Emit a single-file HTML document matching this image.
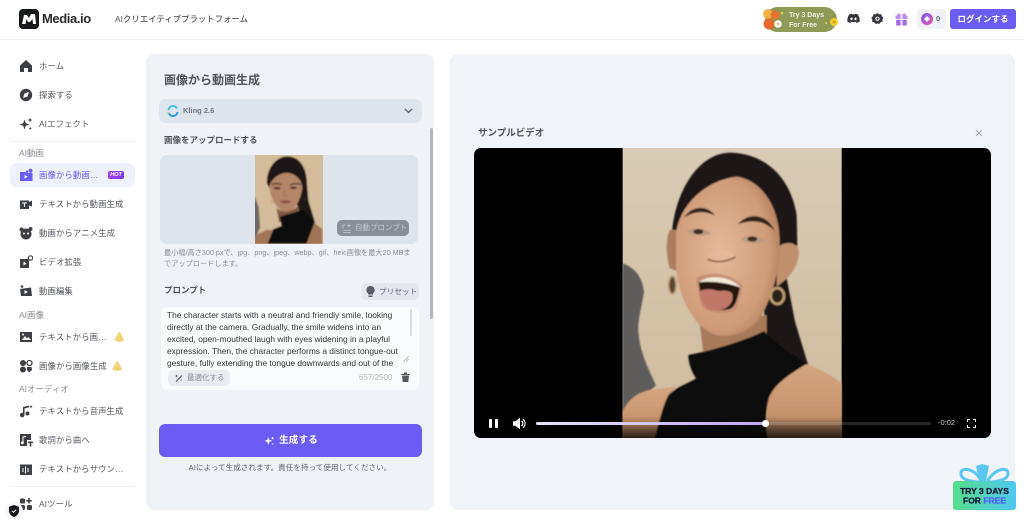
<!DOCTYPE html>
<html lang="ja"><head><meta charset="utf-8"><title>Media.io</title>
<style>
html,body{margin:0;padding:0;background:#fff;}
body{width:1024px;height:525px;overflow:hidden;position:relative;font-family:"Liberation Sans","Noto Sans CJK JP",sans-serif;color:#4a4d55;filter:blur(.3px);}
.a{position:absolute;white-space:nowrap;}
.n{position:absolute;left:39px;font-size:8.4px;line-height:12px;color:#55585f;white-space:nowrap;letter-spacing:.1px;}
.h{position:absolute;left:19px;font-size:8.5px;line-height:12px;color:#8b8e95;white-space:nowrap;}
svg.i{position:absolute;width:14px;height:14px;left:19px;fill:#3d3f45;}
</style></head><body>

<!-- header -->
<div class="a" style="left:0;top:39px;width:1024px;height:1px;background:#f1f2f4"></div>
<div class="a" style="left:19px;top:9px;width:20px;height:20px;border-radius:4px;background:#17181c"></div>
<svg class="a" style="left:21px;top:13px" width="16" height="12" viewBox="0 0 16 12"><path d="M1 11L3 2h3l2 3 2-4h4l1 10h-3l-.5-5L9 9H7L5.500 6 4.500 11z" fill="#fff"/></svg>
<div class="a" style="left:42px;top:9px;font-size:13px;line-height:20px;font-weight:700;color:#2a2b30;letter-spacing:-.4px">Media.io</div>
<div class="a" style="left:115px;top:12px;font-size:8.300px;line-height:14px;font-weight:500;color:#55575e;letter-spacing:.1px">AIクリエイティブプラットフォーム</div>

<div class="a" style="left:765px;top:7px;width:72px;height:25px;border-radius:13px;background:#8e9a55"></div>
<svg class="a" style="left:760px;top:5px" width="80" height="30" viewBox="0 0 80 30"><g><circle cx="8" cy="9" r="5" fill="#f2b347"/><circle cx="15" cy="10" r="4.500" fill="#e8722f"/><circle cx="9" cy="19" r="5.500" fill="#e5682c"/><circle cx="18" cy="19" r="3.800" fill="#fff"/><circle cx="18" cy="19" r="1.500" fill="#e8d070"/><circle cx="74" cy="17" r="4" fill="#f1cd2d"/><circle cx="74" cy="17" r="1.500" fill="#c4a220"/><circle cx="22" cy="8" r="1.200" fill="#e9d34f"/><circle cx="66" cy="18" r="1" fill="#e9d34f"/></g></svg>
<div class="a" style="left:789px;top:11px;font-size:7px;line-height:9.500px;color:#f2f2e4;font-weight:700">Try 3 Days<br>For Free</div>

<svg class="a" style="left:847px;top:13px" width="13" height="11" viewBox="0 0 24 19"><path d="M20 2A19 19 0 0 0 15.500.5l-.6 1.300a18 18 0 0 0-5.800 0L8.500.5A19 19 0 0 0 4 2C1 6.500.3 10.800.6 15.100A19 19 0 0 0 6.300 18l1.200-2a12 12 0 0 1-1.900-.9l.5-.4a13.500 13.500 0 0 0 11.800 0l.5.4a12 12 0 0 1-1.900.9l1.200 2a19 19 0 0 0 5.700-2.900C23.800 10.100 22.700 5.800 20 2zM8.300 12.500c-1.100 0-2.100-1.100-2.100-2.400s.9-2.400 2.100-2.400 2.100 1.100 2.100 2.400-.9 2.400-2.100 2.400zm7.400 0c-1.100 0-2.100-1.100-2.100-2.400s.9-2.400 2.100-2.400 2.100 1.100 2.100 2.400-.9 2.400-2.100 2.400z" fill="#35373c"/></svg>
<svg class="a" style="left:871px;top:12px" width="13" height="14" viewBox="0 0 24 24"><path d="M12 1l3 2.500 4-.5 1 4 3 3-2 3 .500 4-4 1-2.500 3.500L12 20l-3.500 1.500L6 18l-4-1 .500-4-2-3 3-3 1-4 4 .500z" fill="#35373c"/><circle cx="12" cy="11.500" r="4" fill="#fff"/><circle cx="12" cy="11.500" r="2" fill="#35373c"/></svg>
<svg class="a" style="left:895px;top:12px" width="13" height="14" viewBox="0 0 13 14"><path d="M3 1l3.500 2L10 1l.8 2.500H12.500V7H.5V3.500h1.700z" fill="#bf8df0"/><rect x="1.200" y="8" width="10.600" height="5.500" fill="#a86be8"/><rect x="5.500" y="3" width="2" height="10.500" fill="#f2e8fc"/></svg>
<div class="a" style="left:917px;top:9px;width:29px;height:20px;border-radius:4px;background:#f1f2f6"></div>
<div class="a" style="left:921px;top:13px;width:12px;height:12px;border-radius:50%;background:linear-gradient(135deg,#7a5cf0,#e851b5)"></div>
<svg class="a" style="left:924px;top:16px" width="6" height="6" viewBox="0 0 7 7"><path d="M3.500 0L7 3.500 3.500 7 0 3.500z" fill="#fff"/></svg>
<div class="a" style="left:936px;top:13px;font-size:7.500px;line-height:12px;color:#61636a;font-weight:700">0</div>
<div class="a" style="left:950px;top:9px;width:66px;height:20px;border-radius:3px;background:#6b5cf3;color:#fff;font-size:8.500px;line-height:20px;text-align:center;font-weight:700">ログインする</div>

<!-- sidebar -->
<svg class="i" style="top:59px" viewBox="0 0 14 14"><path d="M7 1L1 6.500V13h4V9h4v4h4V6.500z"/></svg>
<div class="n" style="top:60px">ホーム</div>
<svg class="i" style="top:88px" viewBox="0 0 14 14"><path fill-rule="evenodd" d="M7 .8a6.200 6.200 0 1 0 0 12.400A6.200 6.200 0 0 0 7 .8zM10 4L8.500 8.500 4 10l1.500-4.500z"/></svg>
<div class="n" style="top:89px">探索する</div>
<svg class="i" style="top:117px" viewBox="0 0 14 14"><path d="M5.500 2.500l1.300 3.700 3.700 1.300-3.700 1.300-1.300 3.700-1.300-3.700L.5 7.500l3.700-1.300zM11 1l.7 1.300L13 3l-1.300.7L11 5l-.7-1.300L9 3l1.300-.7zM11.300 10l.5 1 1 .5-1 .5-.5 1-.5-1-1-.5 1-.5z"/></svg>
<div class="n" style="top:118px">AIエフェクト</div>
<div class="a" style="left:10px;top:141px;width:125px;height:1px;background:#f0f1f3"></div>
<div class="h" style="top:147px">AI動画</div>

<div class="a" style="left:10px;top:163px;width:125px;height:24px;border-radius:7px;background:#eef1fb"></div>
<svg class="i" style="top:168px;fill:#6b5cf3" viewBox="0 0 14 14"><path fill-rule="evenodd" d="M1 4h5.500l1-1.500H9V5h4.500v8H1zM5.500 7v3.500L9 8.700z"/><circle cx="11.500" cy="2.800" r="2"/></svg>
<div class="n" style="top:169px;color:#6b5cf3">画像から動画…</div>
<div class="a" style="left:108px;top:171px;width:16px;height:8px;border-radius:2px;background:linear-gradient(90deg,#a13df0,#7a3cf0);color:#fff;font-size:5.500px;line-height:8px;text-align:center;font-weight:700;font-style:italic">HOT</div>

<svg class="i" style="top:197px" viewBox="0 0 14 14"><path d="M1 3.500h9V5l3-1.500v6L10 8.500V12H1z"/><path d="M3 6h5M5.500 6v4" stroke="#fff" stroke-width="1.100" fill="none"/></svg>
<div class="n" style="top:198px">テキストから動画生成</div>
<svg class="i" style="top:226px" viewBox="0 0 14 14"><circle cx="7" cy="8" r="5.500"/><circle cx="2.500" cy="3.500" r="2"/><circle cx="11.500" cy="3" r="2"/><circle cx="5" cy="7.500" r="1" fill="#fff"/><circle cx="9" cy="7.500" r="1" fill="#fff"/></svg>
<div class="n" style="top:227px">動画からアニメ生成</div>
<svg class="i" style="top:255px" viewBox="0 0 14 14"><path fill-rule="evenodd" d="M1 4h9v9H1zM4.500 6.500v4l3-2z"/><circle cx="11.500" cy="3" r="2.200" fill="none" stroke="#3d3f45" stroke-width="1.200"/></svg>
<div class="n" style="top:256px">ビデオ拡張</div>
<svg class="i" style="top:284px" viewBox="0 0 14 14"><path d="M1 5l11-1.500 1 8.500H2z"/><path d="M5.500 6v4l3.500-2z" fill="#fff"/><circle cx="3" cy="2.500" r="1.300"/></svg>
<div class="n" style="top:285px">動画編集</div>
<div class="h" style="top:309px">AI画像</div>
<svg class="i" style="top:330px" viewBox="0 0 14 14"><path fill-rule="evenodd" d="M1 2h12v10H1zM3 10l3-4 2 2.500 1.500-1.500L12 10z"/><circle cx="4" cy="4.500" r="1" fill="#fff"/></svg>
<div class="n" style="top:331px">テキストから画…</div>
<div class="a" style="left:114px;top:332px;width:10px;height:10px;background:linear-gradient(135deg,#f0dc7a,#e8c246);clip-path:polygon(45% 0,60% 0,100% 85%,55% 100%,0 85%);opacity:.85"></div>
<svg class="i" style="top:359px" viewBox="0 0 14 14"><circle cx="4" cy="4" r="3"/><circle cx="10.500" cy="4" r="2.500" fill="none" stroke="#3d3f45" stroke-width="1.300"/><circle cx="4" cy="10.500" r="3"/><path d="M8 8h4.500l.5 3-3 2.500L8 11z"/></svg>
<div class="n" style="top:360px">画像から画像生成</div>
<div class="a" style="left:112px;top:361px;width:10px;height:10px;background:linear-gradient(135deg,#f0dc7a,#e8c246);clip-path:polygon(45% 0,60% 0,100% 85%,55% 100%,0 85%);opacity:.85"></div>
<div class="h" style="top:383px">AIオーディオ</div>
<svg class="i" style="top:404px" viewBox="0 0 14 14"><path d="M4 3l6-1.500v1.800L5.500 4.500V11a2.300 2.300 0 1 1-1.500-2.100z"/><circle cx="8.500" cy="9.500" r="2"/><path d="M12 1l.5 1.200 1.200.5-1.200.5L12 4.500l-.5-1.300-1.200-.5 1.200-.5z"/></svg>
<div class="n" style="top:405px">テキストから音声生成</div>
<svg class="i" style="top:433px" viewBox="0 0 14 14"><path d="M1 1h11v6H8v6H1z"/><path d="M4 9.500V4l3-.6" stroke="#fff" stroke-width="1" fill="none"/><circle cx="3.400" cy="9.800" r="1.400" fill="#fff"/><path d="M9 8.500h5V10h-1.700v3.500h-1.600V10H9z"/></svg>
<div class="n" style="top:434px">歌詞から曲へ</div>
<svg class="i" style="top:462px" viewBox="0 0 14 14"><path fill-rule="evenodd" d="M1 2.500h12V13H1zM3.500 6v4h1V6zM6 4.500v7h1v-7zM8.500 6v4h1V6z"/></svg>
<div class="n" style="top:463px">テキストからサウン…</div>
<div class="a" style="left:10px;top:486px;width:125px;height:1px;background:#eeeff2"></div>
<svg class="i" style="top:497px" viewBox="0 0 14 14"><rect x="1" y="1.500" width="5" height="5" rx="1"/><path d="M10 1v5.500M7.300 3.800h5.400" stroke="#3d3f45" stroke-width="1.600"/><rect x="1" y="8" width="5" height="5" rx="1.500"/><rect x="8" y="8" width="5" height="5" rx="1.500"/></svg>
<div class="n" style="top:498px">AIツール</div>
<div class="a" style="left:5px;top:502px;width:18px;height:18px;border-radius:50%;background:#f7f7f8"></div>
<svg class="a" style="left:9px;top:505px" width="10" height="12" viewBox="0 0 10 12"><path d="M5 0l5 1.700v4C10 9 7.500 11 5 12 2.500 11 0 9 0 5.700v-4z" fill="#17181c"/><path d="M2.800 5.800l1.600 1.600 2.800-2.800" stroke="#fff" stroke-width="1" fill="none"/></svg>

<!-- left panel -->
<div class="a" style="left:146px;top:54px;width:288px;height:456px;border-radius:8px;background:#eff3f8"></div>
<div class="a" style="left:164px;top:72px;font-size:12px;line-height:17px;font-weight:700;color:#50535a">画像から動画生成</div>
<div class="a" style="left:159px;top:99px;width:263px;height:24px;border-radius:7px;background:#dfe5ec"></div>
<svg class="a" style="left:167px;top:105px" width="12" height="12" viewBox="0 0 12 12"><path d="M1.500 5A4.500 4.500 0 0 1 10 3.500" stroke="#3cc0e0" stroke-width="2" fill="none"/><path d="M10.500 7A4.500 4.500 0 0 1 2 8.500" stroke="#2a9fe0" stroke-width="2" fill="none"/><path d="M1.500 7.500v1" stroke="#58d08a" stroke-width="2"/></svg>
<div class="a" style="left:183px;top:105px;font-size:7.500px;line-height:12px;font-weight:700;color:#71747b">Kling 2.6</div>
<svg class="a" style="left:404px;top:108px" width="9" height="6" viewBox="0 0 9 6"><path d="M.8.800L4.500 4.500 8.200.8" stroke="#5f6268" stroke-width="1.300" fill="none"/></svg>
<div class="a" style="left:164px;top:134px;font-size:8.500px;line-height:13px;font-weight:700;color:#50535a">画像をアップロードする</div>

<div class="a" style="left:160px;top:155px;width:258px;height:89px;border-radius:7px;background:#dee4ec"></div>
<svg class="a" style="left:255px;top:155px" width="68" height="89" viewBox="17 14 200 266" preserveAspectRatio="none">
<defs><filter id="b1" x="-5%" y="-5%" width="110%" height="110%"><feGaussianBlur stdDeviation="2"/></filter></defs>
<g filter="url(#b1)">
<rect x="10" y="8" width="215" height="280" fill="#d3bc9b"/>
<path d="M10 122L28 170 32 230 10 285z" fill="#6e6964"/>
<path d="M52 100C50 55 78 18 112 18 152 18 170 58 170 100L174 150 194 216 150 220 140 160 70 130z" fill="#1c1512"/>
<path d="M60 105C68 80 95 64 118 68 142 74 156 92 156 112 153 145 132 186 112 186 86 186 64 145 60 118z" fill="#b58568"/>
<path d="M80 172C100 190 125 185 145 165L150 200 88 215z" fill="#7f5640"/>
<path d="M10 280V258L50 238 68 238 55 280zM165 280L172 240 190 215 215 235V280z" fill="#a07454"/>
<path d="M90 198L158 178 192 216 168 280H54L70 236 95 226z" fill="#0f0d0c"/>
<path d="M66 103q14-8 28 0M120 104q16-8 32-2" stroke="#35241b" stroke-width="3.500" fill="none"/>
<ellipse cx="82" cy="113" rx="10" ry="3.500" fill="#3f2a20"/><ellipse cx="130" cy="112" rx="10" ry="3.500" fill="#3f2a20"/>
<path d="M88 153q18-8 36 0-18 13-36 0z" fill="#8e5346"/>
<path d="M105 115l-4 20h12" stroke="#94684e" stroke-width="2" fill="none"/>
<circle cx="68" cy="153" r="4" fill="none" stroke="#b99b6c" stroke-width="2"/><circle cx="162" cy="146" r="5" fill="#2a2018"/>
</g></svg>
<div class="a" style="left:337px;top:220px;width:72px;height:16px;border-radius:5px;background:#8a8f96;color:#c6cad0;font-size:7.500px;line-height:16px;padding-left:18px;box-sizing:border-box">自動プロンプト</div>
<svg class="a" style="left:342px;top:223px" width="10" height="10" viewBox="0 0 10 10"><path d="M1 7.500h8M1 9.500h8M1 5.500V2h3M7 .5v4M5 2.500h4" stroke="#c6cad0" stroke-width=".8" fill="none"/></svg>
<div class="a" style="left:164px;top:248px;width:252px;white-space:normal;font-size:7.200px;line-height:10.500px;color:#8b8e95">最小幅/高さ300 pxで、jpg、png、jpeg、webp、gif、heic画像を最大20 MBまでアップロードします。</div>

<div class="a" style="left:430px;top:128px;width:3px;height:191px;border-radius:2px;background:#b4b8bf"></div>

<div class="a" style="left:164px;top:284px;font-size:8.500px;line-height:13px;font-weight:700;color:#50535a">プロンプト</div>
<div class="a" style="left:361px;top:283px;width:58px;height:17px;border-radius:5px;background:#e4e8ee;color:#5f6269;font-size:7.500px;line-height:17px;padding-left:18px;box-sizing:border-box;letter-spacing:.2px">プリセット</div>
<svg class="a" style="left:366px;top:286px" width="9" height="11" viewBox="0 0 9 11"><path d="M4.500 0a4 4 0 0 1 2.500 7.200V8.500H2V7.200A4 4 0 0 1 4.500 0zM2.500 9.500h4V11h-4z" fill="#5a5d64"/></svg>

<div class="a" style="left:161px;top:307px;width:258px;height:83px;border-radius:6px;background:#fafbfd"></div>
<div class="a" style="left:167px;top:309px;width:240px;height:60px;overflow:hidden;font-size:8.400px;line-height:12px;color:#33353a;white-space:pre">The character starts with a neutral and friendly smile, looking
directly at the camera. Gradually, the smile widens into an
excited, open-mouthed laugh with eyes widening in a playful
expression. Then, the character performs a distinct tongue-out
gesture, fully extending the tongue downwards and out of the</div>
<div class="a" style="left:410px;top:309px;width:2px;height:27px;background:#d9dbdf;border-radius:1px"></div>
<svg class="a" style="left:403px;top:356px" width="6" height="6" viewBox="0 0 6 6"><path d="M5.500.5L.5 5.500M5.500 3L3 5.500" stroke="#999" stroke-width=".7"/></svg>
<div class="a" style="left:168px;top:370px;width:62px;height:16px;border-radius:5px;background:#e9ecf1;color:#8a8d94;font-size:7.500px;line-height:16px;padding-left:19px;box-sizing:border-box">最適化する</div>
<svg class="a" style="left:175px;top:374px" width="8" height="8" viewBox="0 0 8 8"><path d="M1 7.500L7 1.500" stroke="#5a5d64" stroke-width="1.200"/><path d="M1.500.5l.5 1 1 .5-1 .5-.5 1-.5-1-1-.5 1-.5zM6.500 5l.3.700.7.300-.7.300-.3.700-.3-.7-.7-.3.7-.3z" fill="#5a5d64"/></svg>
<div class="a" style="left:359px;top:372px;font-size:8px;line-height:12px;color:#b5b8be">657/2500</div>
<svg class="a" style="left:401px;top:372px" width="9" height="10" viewBox="0 0 9 10"><path d="M0 2h9v1H0zM3 .5h3V2H3zM1 3.500h7L7.300 10H1.700z" fill="#55585e"/></svg>

<div class="a" style="left:159px;top:424px;width:263px;height:33px;border-radius:6px;background:#6b5cf3;color:#fff;font-size:9.500px;line-height:33px;text-align:center;font-weight:700;letter-spacing:.2px"><span style="margin-left:16px">生成する</span></div>
<svg class="a" style="left:264px;top:435px" width="11" height="11" viewBox="0 0 14 14"><path d="M5.500 2.500l1.300 3.700 3.700 1.300-3.700 1.300-1.300 3.700-1.300-3.700L.5 7.500l3.700-1.300zM11 2l.6 1.400L13 4l-1.400.6L11 6l-.6-1.400L9 4l1.400-.6zM11.300 10l.4 1 1 .4-1 .4-.4 1-.4-1-1-.4 1-.4z" fill="#fff"/></svg>
<div class="a" style="left:160px;top:462px;width:260px;text-align:center;font-size:7.500px;line-height:12px;color:#5f6269;letter-spacing:.1px">AIによって生成されます。責任を持って使用してください。</div>

<!-- right panel -->
<div class="a" style="left:450px;top:54px;width:565px;height:456px;border-radius:8px;background:#f0f3f8"></div>
<div class="a" style="left:478px;top:127px;font-size:9.500px;line-height:14px;font-weight:700;color:#4f5259">サンプルビデオ</div>
<svg class="a" style="left:975px;top:129px" width="8" height="8" viewBox="0 0 8 8"><path d="M1 1l6 6M7 1L1 7" stroke="#a4a7ad" stroke-width=".9"/></svg>

<div class="a" style="left:474px;top:148px;width:517px;height:290px;border-radius:7px;background:#000;overflow:hidden">
<svg class="a" style="left:146px;top:-3px" width="225" height="295" viewBox="0 0 675 885">
<defs>
<filter id="b2" x="-5%" y="-5%" width="110%" height="110%"><feGaussianBlur stdDeviation="2.500"/></filter>
<linearGradient id="bg" x1="0" y1="0" x2="0" y2="1"><stop offset="0" stop-color="#d9ccb7"/><stop offset="1" stop-color="#cdba9c"/></linearGradient>
<radialGradient id="sk" cx=".42" cy=".48" r=".72"><stop offset="0" stop-color="#e6b998"/><stop offset=".66" stop-color="#cf9b78"/><stop offset="1" stop-color="#9e6b4b"/></radialGradient>
<linearGradient id="sh" x1="0" y1="0" x2="0" y2="1"><stop offset="0" stop-color="#d6a67f"/><stop offset=".72" stop-color="#c4906a"/><stop offset="1" stop-color="#5e4432"/></linearGradient>
</defs>
<rect x="8" y="8" width="657" height="880" fill="url(#bg)"/>
<g filter="url(#b2)">
<path d="M8 355C35 365 65 385 72 440 65 490 50 530 56 570 62 630 90 680 108 722L8 800z" fill="#5e5c5c"/>
<path d="M155 280C160 150 230 25 330 23 430 25 510 90 530 210L532 300 500 400 525 530 565 662 445 620 430 480 170 300z" fill="#1f1613"/>
<path d="M150 255L176 255 176 380 150 370C138 340 136 275 150 255z" fill="#ad7c5d"/>
<path d="M470 310C492 285 535 290 537 320 535 370 505 400 470 425z" fill="#c08f6c"/>
<path d="M240 540L440 510 440 590 250 625z" fill="#a87a5a"/>
<path d="M168 265C178 185 250 108 350 95 420 105 472 175 478 270 482 360 465 440 420 520 385 565 330 578 290 570 230 555 178 470 168 370z" fill="url(#sk)"/>
<path d="M8 800C25 760 60 740 90 735L168 725 135 790 105 885H8z" fill="url(#sh)"/>
<path d="M445 750C480 710 515 670 550 655 600 670 640 695 665 715V885H435z" fill="url(#sh)"/>
<path d="M205 630C260 620 370 590 432 558 470 600 520 630 562 655 515 685 470 710 448 755 435 800 435 850 445 885H103C115 840 125 790 145 750 170 725 205 715 228 700 215 680 205 655 205 630z" fill="#100d0c"/>
<path d="M192 218C215 180 265 180 285 212 255 196 222 198 192 218z" fill="#33201a"/>
<path d="M353 238C385 200 440 205 465 258 430 224 395 224 353 238z" fill="#33201a"/>
<path d="M200 258C220 246 255 248 275 266 250 274 220 272 200 258z" fill="#b89a80"/>
<ellipse cx="235" cy="260" rx="15" ry="8" fill="#3f2c20"/>
<path d="M362 282C385 268 415 270 435 290 410 297 385 296 362 282z" fill="#b89a80"/>
<ellipse cx="397" cy="282" rx="15" ry="8" fill="#3f2c20"/>
<path d="M262 340C280 305 330 305 345 335 340 355 300 362 262 340z" fill="#e4b898"/>
<path d="M262 342q40 18 85 -6" stroke="#8f5f45" stroke-width="5" fill="none"/>
<path d="M228 400C265 378 330 380 368 422L350 490C335 510 270 510 245 485z" fill="#c88f76"/>
<path d="M236 412C270 400 330 405 360 428 350 470 345 485 330 492 300 500 260 495 245 470z" fill="#231210"/>
<path d="M238 412C262 388 332 392 362 428 320 412 272 407 238 412z" fill="#f3ead8"/>
<path d="M238 440C260 425 290 438 300 438 315 435 335 438 338 450 340 475 325 492 290 497 255 495 240 475 238 440z" fill="#c07868"/>
<ellipse cx="157" cy="420" rx="11" ry="26" fill="#5a4530" stroke="#b6996f" stroke-width="5"/>
<ellipse cx="472" cy="453" rx="20" ry="24" fill="#2a2018" stroke="#bd9d70" stroke-width="8"/>
</g></svg>
<div class="a" style="left:0;bottom:0;width:517px;height:22px;background:linear-gradient(to top,rgba(0,0,0,.6),rgba(0,0,0,0))"></div>
<div class="a" style="left:15px;top:271px;width:3px;height:9px;background:#fff;border-radius:1px"></div>
<div class="a" style="left:20.500px;top:271px;width:3px;height:9px;background:#fff;border-radius:1px"></div>
<svg class="a" style="left:39px;top:269px" width="13" height="13" viewBox="0 0 13 13"><path d="M0 4.200h2.500L7 .7v11.600L2.500 8.800H0z" fill="#fff"/><path d="M8.500 4a3 3 0 0 1 0 5M10 2.300a5.300 5.300 0 0 1 0 8.400" stroke="#fff" stroke-width="1.100" fill="none"/></svg>
<div class="a" style="left:62px;top:274px;width:395px;height:3px;border-radius:2px;background:rgba(255,255,255,.15)"></div>
<div class="a" style="left:62px;top:274px;width:229px;height:3px;border-radius:2px;background:linear-gradient(90deg,#e8e2f8,#bda8f0)"></div>
<div class="a" style="left:288px;top:272px;width:6.500px;height:6.500px;border-radius:50%;background:#fff"></div>
<div class="a" style="left:464px;top:269px;font-size:7.500px;line-height:12px;color:#d4d4d4">-0:02</div>
<svg class="a" style="left:493px;top:271px" width="9" height="9" viewBox="0 0 9 9"><path d="M.5 3V.5H3M6 .5h2.500V3M8.500 6v2.500H6M3 8.500H.5V6" stroke="#eee" stroke-width="1" fill="none"/></svg>
</div>

<!-- promo -->
<svg class="a" style="left:953px;top:463px" width="63" height="48" viewBox="0 0 63 48">
<defs><linearGradient id="pr" x1="0" y1="0" x2="1" y2="0"><stop offset="0" stop-color="#56de8c"/><stop offset="1" stop-color="#4fc8f0"/></linearGradient></defs>
<path d="M28 17C20 4 7 4 8 11 8 16 17 19 28 19zM35 17C44 4 56 4 55 11 55 16 46 19 35 19z" fill="none" stroke="#5cc8f2" stroke-width="3"/>
<path d="M23 3l6-2 7 2-3 15h-7z" fill="#58c6f0"/>
<rect x="0" y="18" width="63" height="29" rx="3" fill="url(#pr)"/>
<text x="31.500" y="31" text-anchor="middle" font-family="Liberation Sans, sans-serif" font-size="8.500" font-weight="700" fill="#14203a" stroke="#14203a" stroke-width=".35">TRY 3 DAYS</text>
<text x="31.500" y="40.500" text-anchor="middle" font-family="Liberation Sans, sans-serif" font-size="8.500" font-weight="700" fill="#14203a" stroke="#14203a" stroke-width=".35">FOR <tspan fill="#4f63f2" stroke="#4f63f2">FREE</tspan></text>
</svg>
</body></html>
